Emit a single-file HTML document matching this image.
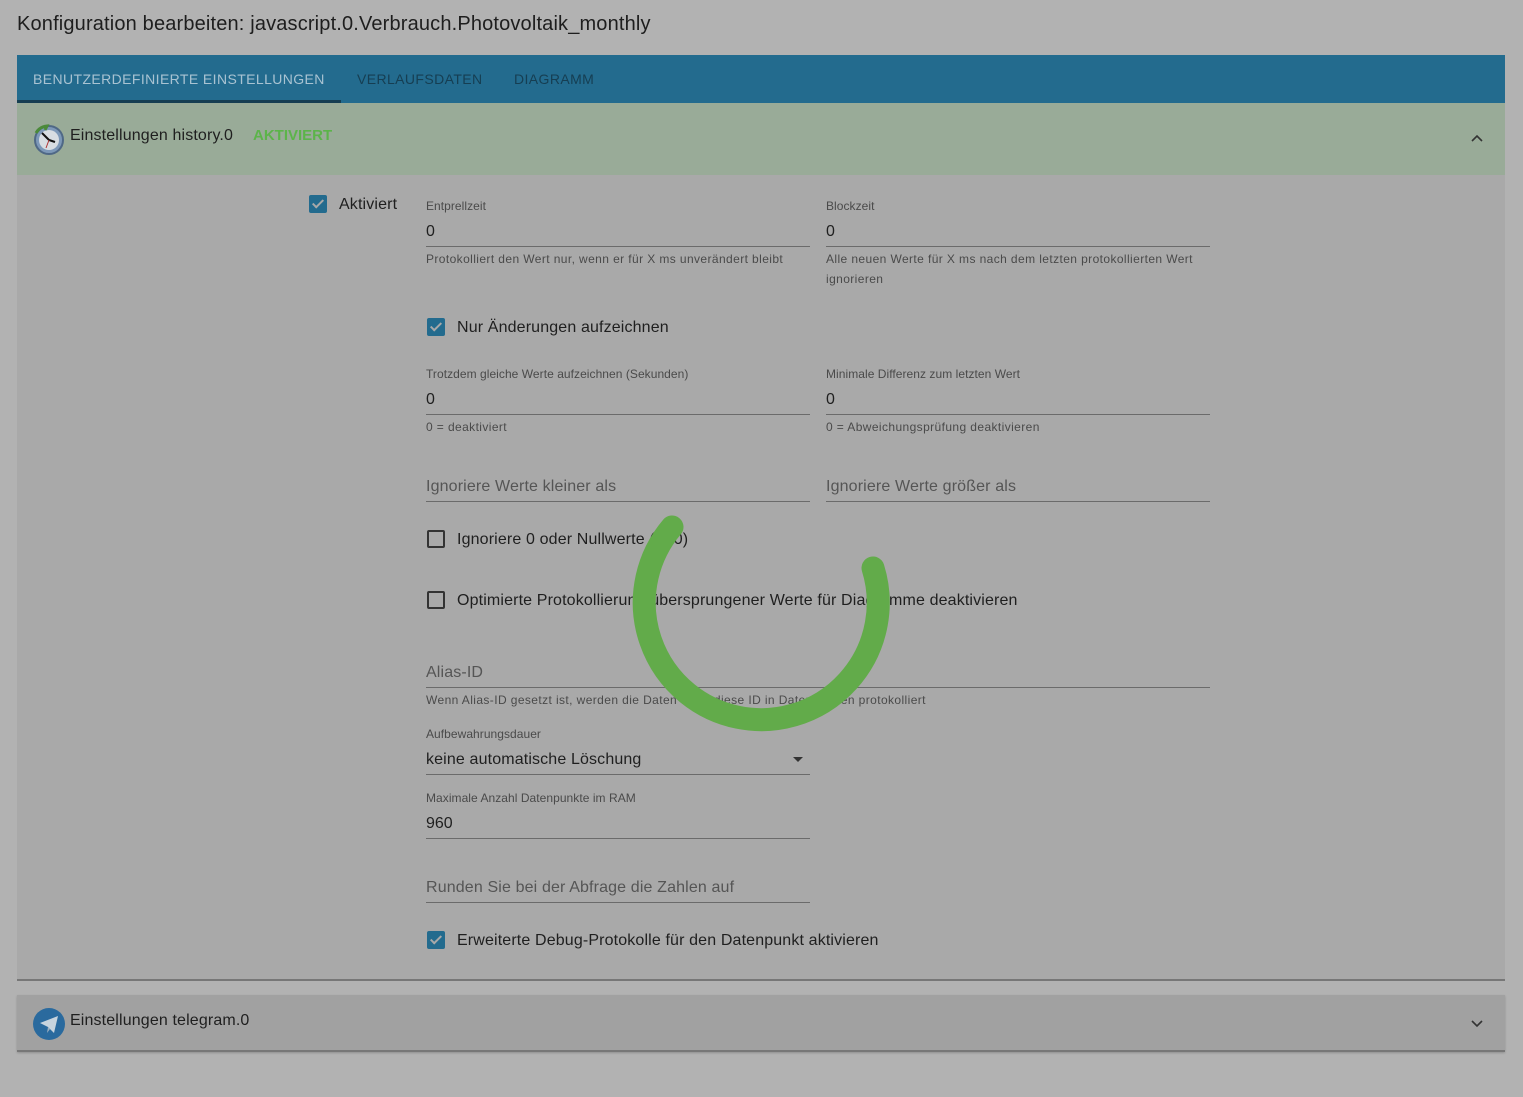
<!DOCTYPE html>
<html><head><meta charset="utf-8"><style>
*{margin:0;padding:0;box-sizing:border-box}
body{width:1523px;height:1097px;background:#b2b2b2;font-family:"Liberation Sans",sans-serif;position:relative;overflow:hidden;color:#1f1f1f}
.a{position:absolute;white-space:nowrap}
.title{left:17px;top:13px;font-size:20px;color:#1e1e1e;letter-spacing:.16px}
.tabs{left:17px;top:55px;width:1488px;height:48px;background:#236b8e}
.tab{position:absolute;top:16px;font-size:14px;color:#163e52;letter-spacing:.4px}
.panel{left:17px;top:103px;width:1488px;height:878px;background:#a9a9a9;border-bottom:2px solid #777}
.hdr{left:17px;top:103px;width:1488px;height:72px;background:#99ab98}
.lbl{font-size:12px;color:#4a4a4a;letter-spacing:.05px}
.val{font-size:16px;color:#1f1f1f;margin-top:2px}
.help{font-size:12px;color:#4a4a4a;letter-spacing:.4px;line-height:20px}
.ph{font-size:16px;color:#555;margin-top:2px;letter-spacing:.14px}
.line{position:absolute;height:1px;background:#6b6b6b}
.cb{position:absolute;width:18px;height:18px;border-radius:2px}
.cb.on{background:#236b8e}
.cb.off{border:2px solid #333}
.cb.on:after{content:"";position:absolute;left:6px;top:2px;width:4px;height:9px;border:solid #a9a9a9;border-width:0 2px 2px 0;transform:rotate(45deg)}
.cbt{font-size:16px;color:#1f1f1f;margin-top:2px;letter-spacing:.14px}
.tg{left:17px;top:995px;width:1488px;height:57px;background:#a1a1a1;border-bottom:2px solid #777;box-shadow:0 1px 2px rgba(0,0,0,.2)}
</style></head><body>
<div class="a title">Konfiguration bearbeiten: javascript.0.Verbrauch.Photovoltaik_monthly</div>
<div class="a tabs">
 <div class="tab" style="left:16px;color:#a9c3d2">BENUTZERDEFINIERTE EINSTELLUNGEN</div>
 <div class="tab" style="left:340px">VERLAUFSDATEN</div>
 <div class="tab" style="left:497px">DIAGRAMM</div>
 <div style="position:absolute;left:0;top:45px;width:324px;height:3px;background:#163e52"></div>
</div>
<div class="a panel"></div>
<div class="a hdr">
 <svg style="position:absolute;left:16px;top:20px" width="32" height="32" viewBox="0 0 32 32"><circle cx="16" cy="17" r="14" fill="#7d98b8" stroke="#4f6886" stroke-width="2"/><circle cx="16" cy="17" r="10" fill="#d8dde2"/><path d="M16 17L9 10M16 17L22 19" stroke="#111" stroke-width="2"/><path d="M16 17L13 25" stroke="#b03030" stroke-width="1"/><path d="M3 10A14 14 0 0 1 14 3L12 7" fill="none" stroke="#4b8a3a" stroke-width="3"/></svg>
 <div class="a" style="left:53px;top:24px;font-size:16px;color:#1f1f1f;letter-spacing:.14px">Einstellungen history.0</div>
 <div class="a" style="left:236px;top:24px;font-size:15px;font-weight:bold;color:#5cb44a">AKTIVIERT</div>
 <svg style="position:absolute;left:1453px;top:30px" width="14" height="10" viewBox="0 0 14 10"><path d="M2 8L7 3L12 8" fill="none" stroke="#333" stroke-width="1.6"/></svg>
</div>

<div class="cb on" style="left:309px;top:195px"></div><div class="a cbt" style="left:339px;top:194px">Aktiviert</div>

<div class="a lbl" style="left:426px;top:199px">Entprellzeit</div>
<div class="a val" style="left:426px;top:221px">0</div>
<div class="line" style="left:426px;top:246px;width:384px"></div>
<div class="a help" style="left:426px;top:249px">Protokolliert den Wert nur, wenn er für X ms unverändert bleibt</div>

<div class="a lbl" style="left:826px;top:199px">Blockzeit</div>
<div class="a val" style="left:826px;top:221px">0</div>
<div class="line" style="left:826px;top:246px;width:384px"></div>
<div class="a help" style="left:826px;top:249px">Alle neuen Werte für X ms nach dem letzten protokollierten Wert<br>ignorieren</div>

<div class="cb on" style="left:427px;top:318px"></div><div class="a cbt" style="left:457px;top:317px">Nur Änderungen aufzeichnen</div>

<div class="a lbl" style="left:426px;top:367px">Trotzdem gleiche Werte aufzeichnen (Sekunden)</div>
<div class="a val" style="left:426px;top:389px">0</div>
<div class="line" style="left:426px;top:414px;width:384px"></div>
<div class="a help" style="left:426px;top:417px">0 = deaktiviert</div>

<div class="a lbl" style="left:826px;top:367px">Minimale Differenz zum letzten Wert</div>
<div class="a val" style="left:826px;top:389px">0</div>
<div class="line" style="left:826px;top:414px;width:384px"></div>
<div class="a help" style="left:826px;top:417px">0 = Abweichungsprüfung deaktivieren</div>

<div class="a ph" style="left:426px;top:476px">Ignoriere Werte kleiner als</div>
<div class="line" style="left:426px;top:501px;width:384px"></div>
<div class="a ph" style="left:826px;top:476px">Ignoriere Werte größer als</div>
<div class="line" style="left:826px;top:501px;width:384px"></div>

<div class="cb off" style="left:427px;top:530px"></div><div class="a cbt" style="left:457px;top:529px">Ignoriere 0 oder Nullwerte (==0)</div>
<div class="cb off" style="left:427px;top:591px"></div><div class="a cbt" style="left:457px;top:590px">Optimierte Protokollierung übersprungener Werte für Diagramme deaktivieren</div>

<div class="a ph" style="left:426px;top:662px">Alias-ID</div>
<div class="line" style="left:426px;top:687px;width:784px"></div>
<div class="a help" style="left:426px;top:690px">Wenn Alias-ID gesetzt ist, werden die Daten unter diese ID in Datendateien protokolliert</div>

<div class="a lbl" style="left:426px;top:727px">Aufbewahrungsdauer</div>
<div class="a val" style="left:426px;top:749px;letter-spacing:.14px">keine automatische Löschung</div>
<div class="a" style="left:793px;top:757px;width:0;height:0;border-left:5px solid transparent;border-right:5px solid transparent;border-top:5px solid #333"></div>
<div class="line" style="left:426px;top:774px;width:384px"></div>

<div class="a lbl" style="left:426px;top:791px">Maximale Anzahl Datenpunkte im RAM</div>
<div class="a val" style="left:426px;top:813px">960</div>
<div class="line" style="left:426px;top:838px;width:384px"></div>

<div class="a ph" style="left:426px;top:877px">Runden Sie bei der Abfrage die Zahlen auf</div>
<div class="line" style="left:426px;top:902px;width:384px"></div>

<div class="cb on" style="left:427px;top:931px"></div><div class="a cbt" style="left:457px;top:930px">Erweiterte Debug-Protokolle für den Datenpunkt aktivieren</div>

<div class="a tg">
 <svg style="position:absolute;left:16px;top:13px" width="32" height="32" viewBox="0 0 32 32"><circle cx="16" cy="16" r="16" fill="#2a6a9e"/><path d="M7 15L25 8L21 25L15 19Z" fill="#c8d4de"/><path d="M15 19L14 25L17 21Z" fill="#9fb0bf"/></svg>
 <div class="a" style="left:53px;top:17px;font-size:16px;color:#1f1f1f;letter-spacing:.14px">Einstellungen telegram.0</div>
 <svg style="position:absolute;left:1453px;top:24px" width="14" height="10" viewBox="0 0 14 10"><path d="M2 2L7 7L12 2" fill="none" stroke="#333" stroke-width="1.6"/></svg>
</div>

<svg class="a" style="left:0;top:0" width="1523" height="1097"><path d="M672 527A117 117 0 1 0 873 568" fill="none" stroke="#62ab4a" stroke-width="23" stroke-linecap="round"/></svg>
</body></html>
